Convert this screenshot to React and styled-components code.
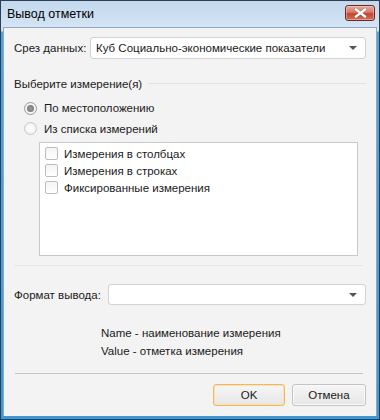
import React from 'react'
import styled, { createGlobalStyle } from 'styled-components'

const Global = createGlobalStyle`
  html, body { margin: 0; padding: 0; background: #ffffff; }
  body { font-family: "Liberation Sans", Arial, sans-serif; font-size: 11.5px; color: #1a1a1a; }
  * { box-sizing: border-box; }
`

const Window = styled.div`
  width: 380px;
  height: 420px;
  overflow: hidden;
  border: 1px solid #2b3e52;
  background: linear-gradient(#c3d8ee, #d6e5f4 30px, #4fa3e0 31px, #3a9ad8);
  display: flex;
  flex-direction: column;
  padding: 0 2px 3px 2px;
`

const TitleBar = styled.div`
  height: 26px;
  flex-shrink: 0;
  display: flex;
  align-items: center;
  justify-content: space-between;
  padding: 0 2px 0 4px;
`

const Title = styled.span`
  font-size: 12.5px;
  color: #000;
  padding-bottom: 1px;
`

const CloseButton = styled.div`
  width: 30px;
  height: 16px;
  margin-top: -2px;
  border: 1px solid #6a2a22;
  border-radius: 3px;
  background: linear-gradient(#e7a89b, #d77966 45%, #c4432f 55%, #d2705c);
  box-shadow: inset 0 0 0 1px rgba(255, 255, 255, 0.35);
  display: flex;
  align-items: center;
  justify-content: center;
`

const Content = styled.div`
  flex: 1;
  min-height: 0;
  background: #f3f3f3;
  border: 1px solid #8fa9c4;
  border-bottom: none;
  display: flex;
  flex-direction: column;
  padding: 9px 10px 10px 10px;
  white-space: nowrap;
`

const FieldRow = styled.div`
  display: flex;
  align-items: center;
  margin-top: ${p => p.$top || 0}px;
`

const Label = styled.span`
  width: ${p => p.$width}px;
  flex-shrink: 0;
`

const Combo = styled.div`
  flex: 1;
  min-width: 0;
  height: ${p => p.$height}px;
  background: #fff;
  border: 1px solid #d2d2d2;
  border-radius: 3px;
  display: flex;
  align-items: center;
  justify-content: space-between;
  padding: 0 8px 0 5px;
`

const Arrow = styled.span`
  width: 0;
  height: 0;
  border-left: 4px solid transparent;
  border-right: 4px solid transparent;
  border-top: 4px solid #555;
`

const GroupHeader = styled.div`
  display: flex;
  align-items: center;
  gap: 6px;
  height: 16px;
  margin-top: 17px;
  &::after {
    content: '';
    flex: 1;
    height: 1px;
    background: #e2e2e2;
  }
`

const RadioRow = styled.label`
  display: flex;
  align-items: center;
  gap: 7px;
  height: 21px;
  padding-left: 10px;
  margin-top: ${p => p.$top || 0}px;
`

const Radio = styled.span`
  width: 13px;
  height: 13px;
  border-radius: 50%;
  border: 1px solid ${p => (p.$checked ? '#9a9a9a' : '#c9c9c9')};
  background: radial-gradient(#ffffff, #ececec);
  display: flex;
  align-items: center;
  justify-content: center;
  &::after {
    content: '';
    width: 7px;
    height: 7px;
    border-radius: 50%;
    background: ${p => (p.$checked ? 'radial-gradient(#9c9c9c, #6d6d6d)' : 'transparent')};
  }
`

const ListBox = styled.div`
  height: 114px;
  flex-shrink: 0;
  margin: 3px 8px 0 25px;
  background: #fff;
  border: 1px solid #c9c9c9;
  padding: 2px 5px;
  display: flex;
  flex-direction: column;
`

const CheckRow = styled.label`
  display: flex;
  align-items: center;
  gap: 6px;
  height: 17px;
`

const Check = styled.span`
  width: 13px;
  height: 13px;
  border: 1px solid #bdbdbd;
  border-radius: 2px;
  background: linear-gradient(#f4f4f4, #ffffff);
`

const Separator = styled.div`
  height: 1px;
  flex-shrink: 0;
  background: ${p => p.$color};
  margin: ${p => p.$top}px ${p => p.$right || 0}px 0 ${p => p.$left || 0}px;
`

const Legend = styled.div`
  margin: 19px 0 0 87px;
  display: flex;
  flex-direction: column;
`

const LegendLine = styled.span`
  height: 18px;
  line-height: 18px;
`

const Buttons = styled.div`
  display: flex;
  justify-content: flex-end;
  gap: 7px;
  margin-top: 10px;
`

const Button = styled.div`
  width: ${p => p.$width}px;
  height: 22px;
  border: 1px solid ${p => (p.$default ? '#f3b85f' : '#c4c4c4')};
  border-radius: 3px;
  background: linear-gradient(#f6f6f6, #e6e6e6);
  box-shadow: ${p => (p.$default ? 'inset 0 0 0 1px #fbe1b5' : 'inset 0 0 0 1px #fafafa')};
  display: flex;
  align-items: center;
  justify-content: center;
`

const App = () => {
  return (
    <Window>
      <Global />
      <TitleBar>
        <Title>Вывод отметки</Title>
        <CloseButton>
          <svg width="13" height="10" viewBox="0 0 13 10">
            <path d="M2 1.5 L11 8.5 M11 1.5 L2 8.5" stroke="#3b1510" strokeWidth="3.4" strokeLinecap="square" opacity="0.35" />
            <path d="M2 1.5 L11 8.5 M11 1.5 L2 8.5" stroke="#ffffff" strokeWidth="2.4" strokeLinecap="square" />
          </svg>
        </CloseButton>
      </TitleBar>
      <Content>
        <FieldRow>
          <Label $width={76}>Срез данных:</Label>
          <Combo $height={22}>
            <span>Куб Социально-экономические показатели</span>
            <Arrow />
          </Combo>
        </FieldRow>

        <GroupHeader>Выберите измерение(я)</GroupHeader>
        <RadioRow $top={6}>
          <Radio $checked />
          <span>По местоположению</span>
        </RadioRow>
        <RadioRow>
          <Radio />
          <span>Из списка измерений</span>
        </RadioRow>
        <ListBox>
          <CheckRow><Check /><span>Измерения в столбцах</span></CheckRow>
          <CheckRow><Check /><span>Измерения в строках</span></CheckRow>
          <CheckRow><Check /><span>Фиксированные измерения</span></CheckRow>
        </ListBox>
        <Separator $top={9} $right={3} $color="#e6e6e6" />

        <FieldRow $top={18}>
          <Label $width={94}>Формат вывода:</Label>
          <Combo $height={21}>
            <span />
            <Arrow />
          </Combo>
        </FieldRow>

        <Legend>
          <LegendLine>Name - наименование измерения</LegendLine>
          <LegendLine>Value - отметка измерения</LegendLine>
        </Legend>

        <Separator $top={13} $left={1} $right={3} $color="#c6c6c6" />

        <Buttons>
          <Button $width={72} $default>OK</Button>
          <Button $width={74}>Отмена</Button>
        </Buttons>
      </Content>
    </Window>
  )
}

export default App
